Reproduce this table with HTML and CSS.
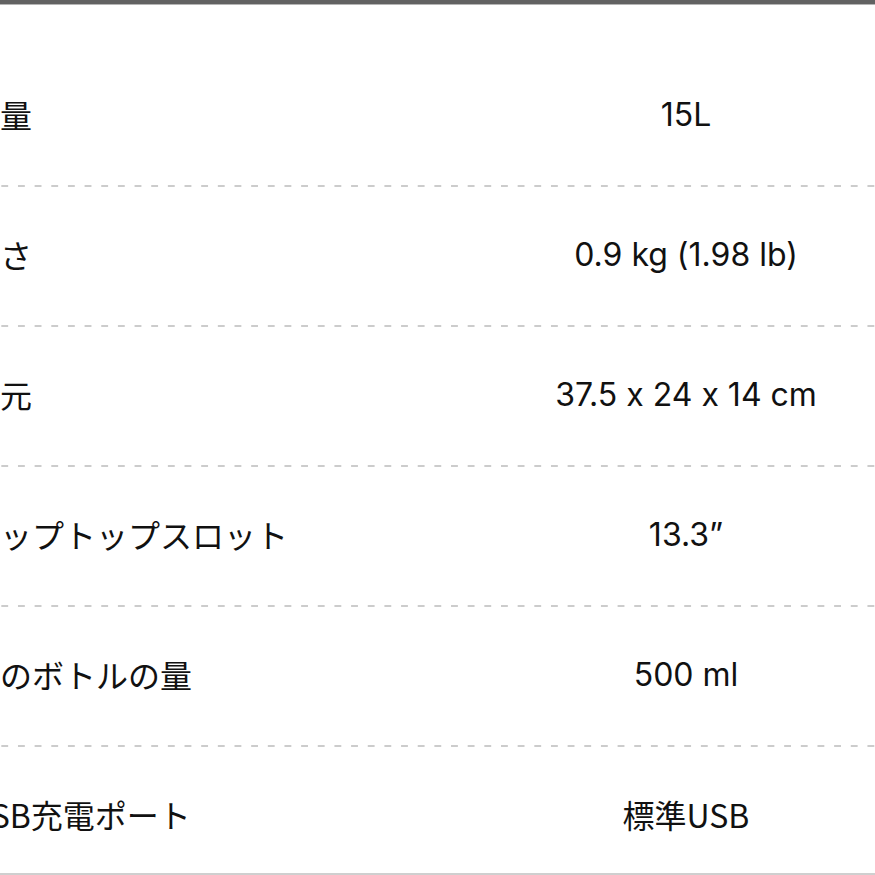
FILE: index.html
```html
<!DOCTYPE html>
<html lang="ja">
<head>
<meta charset="utf-8">
<link rel="stylesheet" href="styles.css">
</head>
<body>
<div class="frame">
  <div class="topbar"></div>
  <div class="specs">
    <div class="row"><div class="label">容量</div><div class="value">15L</div></div>
    <div class="row"><div class="label">重さ</div><div class="value">0.9 kg (1.98 lb)</div></div>
    <div class="row"><div class="label">次元</div><div class="value">37.5 x 24 x 14 cm</div></div>
    <div class="row"><div class="label">ラップトップスロット</div><div class="value">13.3”</div></div>
    <div class="row"><div class="label">水のボトルの量</div><div class="value">500 ml</div></div>
    <div class="row last"><div class="label">USB充電ポート</div><div class="value cjk">標準USB</div></div>
  </div>
</div>
</body>
</html>
```

FILE: styles.css
```css
html, body {
  margin: 0;
  padding: 0;
  background: #ffffff;
  overflow: hidden;
}

.frame {
  width: 875px;
  height: 875px;
  box-sizing: border-box;
  border-bottom: 2px solid #cfcfcf;
  overflow: hidden;
  display: flex;
  flex-direction: column;
}

.topbar {
  height: 4px;
  background: #626262;
  border-bottom: 1px solid #b5b5b5;
  flex: none;
}

.specs {
  margin-left: -32px;
  width: 907px;
  padding-top: 42px;
}

.row {
  display: grid;
  grid-template-columns: 529px 378px;
  align-items: center;
  height: 140px;
  box-sizing: border-box;
  padding-bottom: 2px;
  background-image: linear-gradient(to right, #cccccc 7px, transparent 7px);
  background-size: 16.67px 2px;
  background-repeat: repeat-x;
  background-position: 0 100%;
}

.row.last {
  background-image: none;
}

.label {
  font-family: "Noto Sans CJK JP", sans-serif;
  font-size: 32px;
  color: #111111;
  white-space: nowrap;
  line-height: 1.2;
  margin-top: -3px;
}

.value {
  font-family: "Inter", "Noto Sans CJK JP", sans-serif;
  font-size: 32px;
  font-feature-settings: "calt" 0;
  color: #111111;
  text-align: center;
  white-space: nowrap;
  line-height: 1.2;
  margin-top: -1px;
}

.value.cjk {
  font-family: "Noto Sans CJK JP", sans-serif;
  font-size: 32px;
  margin-top: -3px;
}
```
